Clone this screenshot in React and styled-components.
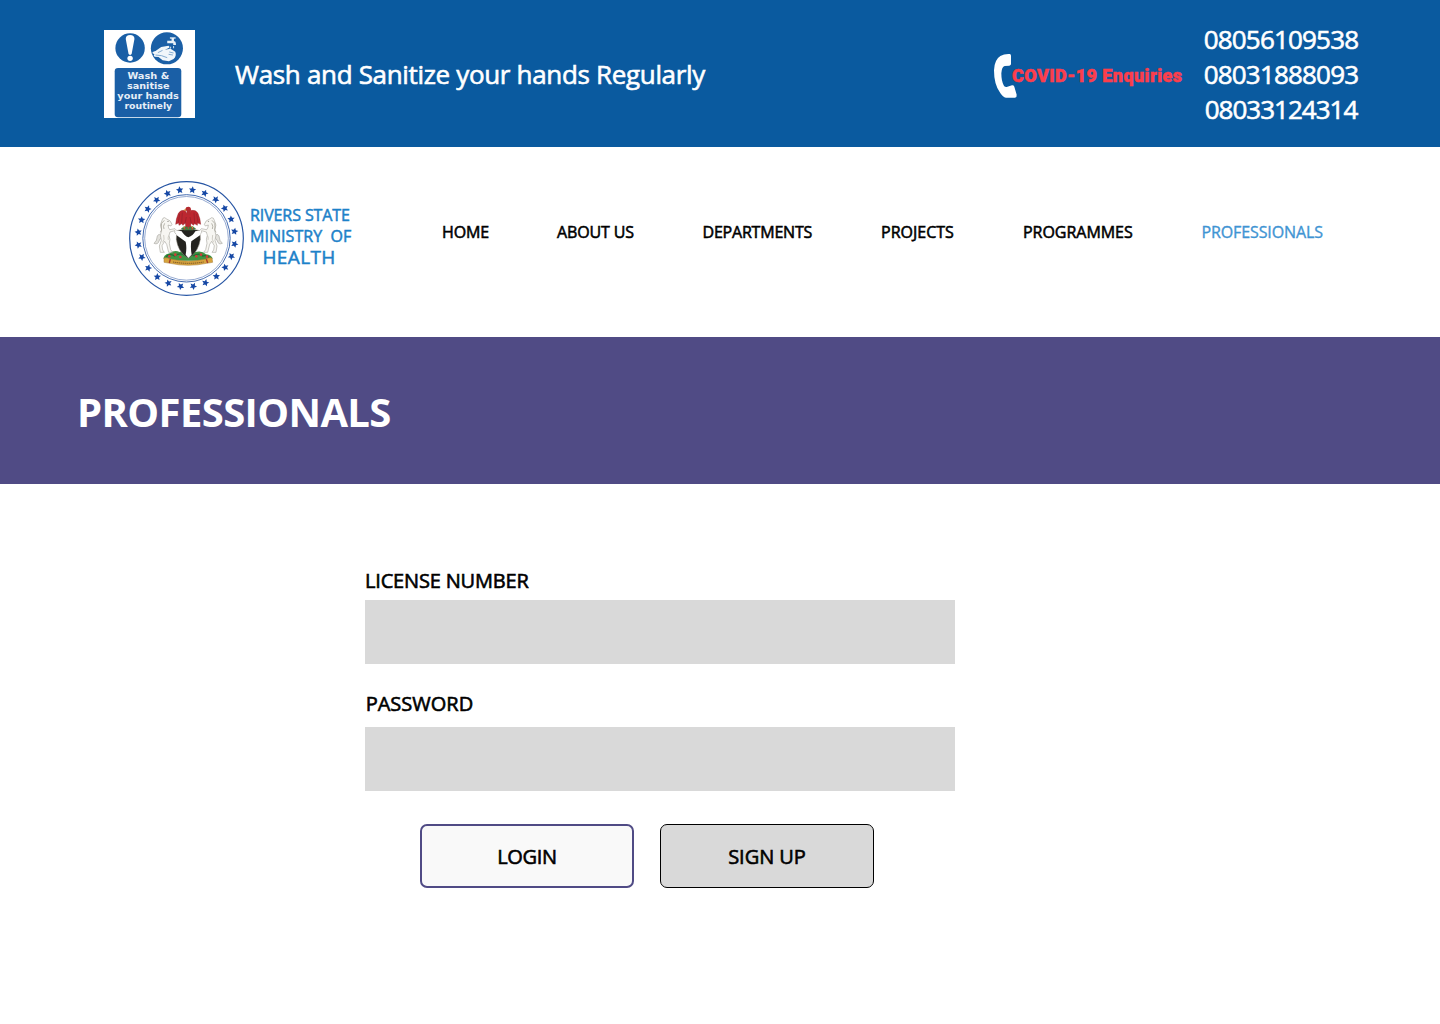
import React from "react";
import styled, { createGlobalStyle } from "styled-components";

const GlobalStyle = createGlobalStyle`
  *, *::before, *::after { box-sizing: border-box; }
  body {
    margin: 0;
    background: #fff;
    color: #000;
    font-family: "Open Sans", "Noto Sans", sans-serif;
  }
`;

const Page = styled.div`
  width: 1440px;
  min-height: 1024px;
  background: #fff;
`;

const AlertBar = styled.header`
  display: flex;
  align-items: flex-start;
  height: 147px;
  padding: 0 0 0 104px;
  background: #0a5a9f;
  color: #fff;
`;

const SignBox = styled.div`
  flex: none;
  width: 91px;
  height: 88px;
  margin-top: 30px;
  svg { display: block; }
`;

const Notice = styled.p`
  flex: 1;
  margin: 56px 0 0 40px;
  font-size: 26px;
  line-height: 36px;
  font-weight: 400;
  -webkit-text-stroke: 0.6px currentColor;
  letter-spacing: -0.33px;
  white-space: nowrap;
`;

const Enquiries = styled.div`
  display: flex;
  align-items: flex-start;
  width: 210px;
  margin-top: 53px;
  svg { display: block; flex: none; }
`;

const EnquiriesLabel = styled.span`
  margin: 11px 0 0 -6px;
  font-family: Roboto, sans-serif;
  font-size: 18px;
  line-height: 24px;
  font-weight: 900;
  color: #fb3e4c;
  -webkit-text-stroke: 0.5px currentColor;
  letter-spacing: 0.43px;
  white-space: nowrap;
`;

const PhoneList = styled.ul`
  list-style: none;
  width: 156px;
  margin: 22px 81px 0 0;
  padding: 0;
  text-align: center;
`;

const Phone = styled.li`
  font-size: 26px;
  line-height: 35px;
  font-weight: 400;
  -webkit-text-stroke: 0.6px currentColor;
  letter-spacing: ${(p) => p.$spacing};
`;

const NavBar = styled.div`
  display: flex;
  align-items: flex-start;
  height: 190px;
  padding: 33px 0 0 128px;
`;

const Brand = styled.div`
  display: flex;
  width: 314px;
  svg { display: block; flex: none; }
`;

const BrandName = styled.div`
  display: flex;
  flex-direction: column;
  margin: 25px 0 0 5px;
  color: #1c81c9;
`;

const BrandLine = styled.span`
  padding-left: ${(p) => p.$indent || 0}px;
  font-size: ${(p) => p.$size || 16}px;
  line-height: 21px;
  font-weight: 400;
  -webkit-text-stroke: 0.5px currentColor;
  letter-spacing: ${(p) => p.$spacing};
  white-space: pre;
`;

const Nav = styled.nav`
  display: flex;
  gap: 68px;
  margin-top: 41px;
`;

const NavLink = styled.a`
  width: ${(p) => p.$width}px;
  font-size: 16px;
  line-height: 22px;
  font-weight: 400;
  -webkit-text-stroke: ${(p) => (p.$active ? "0.35px" : "0.55px")} currentColor;
  color: ${(p) => (p.$active ? "#3f94d3" : "#000")};
  letter-spacing: ${(p) => p.$spacing};
  white-space: nowrap;
`;

const Banner = styled.section`
  display: flex;
  align-items: center;
  height: 147px;
  padding: 3px 0 0 77px;
  background: #504b85;
`;

const BannerTitle = styled.h1`
  margin: 0;
  color: #fff;
  font-size: 40px;
  line-height: 54px;
  font-weight: 700;
  letter-spacing: -0.6px;
`;

const Form = styled.form`
  display: flex;
  flex-direction: column;
  width: 590px;
  margin: 84px 0 0 365px;
`;

const Label = styled.label`
  height: 32px;
  margin-bottom: ${(p) => p.$gap || 0}px;
  padding-left: ${(p) => p.$indent || 0}px;
  font-size: 20px;
  line-height: 26px;
  font-weight: 400;
  -webkit-text-stroke: 0.6px currentColor;
  letter-spacing: ${(p) => p.$spacing};
`;

const Input = styled.input`
  width: 590px;
  height: 64px;
  margin-bottom: ${(p) => p.$after}px;
  padding: 0 16px;
  border: 0;
  border-radius: 0;
  background: #d9d9d9;
  font: inherit;
  font-size: 20px;
`;

const Actions = styled.div`
  display: flex;
  gap: 26px;
  padding-left: 55px;
`;

const Button = styled.button`
  width: 214px;
  height: 64px;
  padding: 2px 0 0;
  border: ${(p) => (p.$primary ? "2px solid #504b85" : "1px solid #000")};
  border-radius: 7px;
  background: ${(p) => (p.$primary ? "#f9f9f9" : "#d9d9d9")};
  color: #000;
  font-family: inherit;
  font-size: 20px;
  line-height: 26px;
  font-weight: 400;
  -webkit-text-stroke: 0.6px currentColor;
  letter-spacing: ${(p) => p.$spacing};
`;

const SignText = styled.text`
  font-family: "DejaVu Sans", sans-serif;
  font-weight: 700;
  font-size: 27px;
  fill: #e6eef7;
`;

function WashSign() {
  return (
    <svg width="91" height="88" viewBox="27 30 272 264" preserveAspectRatio="none">
      <rect x="27" y="30" width="272" height="264" fill="#fff" />
      <circle cx="105" cy="84" r="44" fill="#1a5fa6" />
      <path d="M92 57q0-12 13-12t13 12l-8 43q-1 5-5 5t-5-5z" fill="#fff" />
      <circle cx="105" cy="115" r="8" fill="#fff" />
      <circle cx="215" cy="85" r="48" fill="#1a5fa6" />
      <path d="M216 62h13v-8h7v9q6 1 6 8v4h-8v-5h-18z" fill="#e9f1f8" />
      <path d="M224 54h17" stroke="#e9f1f8" strokeWidth="4" />
      <path d="M181 93l17-12 22-4q6 4-1 8l-10 4 17-3 14 9q5 12-5 22l-14 7-19-3-12-10-12-1q-5-4 0-7l-6-3q-2-5 9-7z" fill="#f1f6fa" />
      <path d="M181 105l18 2 17 6M202 91l-14 7M222 96l13 3M220 103l13 2" stroke="#6f9cc8" strokeWidth="2.5" fill="none" />
      <path d="M235 78v7M227 80l-3 6" stroke="#c8dbec" strokeWidth="3" />
      <rect x="59" y="144" width="199" height="148" rx="10" fill="#1a5fa6" />
      <SignText x="97" y="176" textLength="125" lengthAdjust="spacingAndGlyphs">Wash &amp;</SignText>
      <SignText x="96" y="206" textLength="127" lengthAdjust="spacingAndGlyphs">sanitise</SignText>
      <SignText x="67" y="237" textLength="184" lengthAdjust="spacingAndGlyphs">your hands</SignText>
      <SignText x="88" y="268" textLength="143" lengthAdjust="spacingAndGlyphs">routinely</SignText>
    </svg>
  );
}

function Handset() {
  return (
    <svg width="25" height="46" viewBox="0 0 75 138">
      <path
        d="M22 9Q34 2 50 3q4 1 4 5v25q0 4-5 5l-14 1q-9 3-10 22 0 22 7 36 2 6 9 5l16-5q5-1 7 4l7 24q1 8-5 9H39q-10-1-19-17Q3 93 3 52 4 20 22 9z"
        fill="#fff"
      />
    </svg>
  );
}

const STAR = Array.from({ length: 10 }, (_, i) => {
  const radius = i % 2 ? 5.4 : 11.5;
  const angle = (i * Math.PI) / 5;
  return `${(radius * Math.sin(angle)).toFixed(2)},${(-radius * Math.cos(angle)).toFixed(2)}`;
}).join(" ");

function Horse() {
  return (
    <g stroke="#8d8b82" strokeWidth="1.4" strokeLinejoin="round">
      <path d="M36 111q-8-14-14-3-1 15-10 22 12 5 15-7l4-7z" fill="#e2e1dc" />
      <path
        d="M44 53l6 4q12 3 16 16l-3 5-9-3q1 10 5 14l16-3 7 8-3 9-5-5 1-6-15 4-3 10q5 12 1 24l4 19 6 8H56l-6-24-6-9-8 13 2 13 5 7H31l-3-19 6-17q-6-15 1-31-8-15 1-29 2-9 8-8z"
        fill="#f7f6f2"
      />
      <path d="M43 61q-12 8-9 20 3 10-3 16M44 70q-6 9-2 17" fill="none" stroke="#aaa79c" strokeWidth="2.5" />
      <path d="M41 105q4 14-3 22M56 107q-3 7-1 13" fill="none" stroke="#bdbab1" strokeWidth="2" />
      <circle cx="54" cy="64" r="1" fill="#333" />
    </g>
  );
}

function Crest() {
  return (
    <svg width="117" height="117" viewBox="24 30 351 351">
      <circle cx="199.5" cy="205.5" r="170.5" fill="#fff" stroke="#2856a4" strokeWidth="3.6" />
      <circle cx="199.5" cy="205" r="131" fill="none" stroke="#3761aa" strokeWidth="2.8" />
      <circle cx="199.5" cy="205" r="125.5" fill="none" stroke="#607fb9" strokeWidth="2" />
      {Array.from({ length: 24 }, (_, i) => {
        const a = ((7 + i * 15) * Math.PI) / 180;
        return (
          <polygon
            key={i}
            points={STAR}
            fill="#1648a5"
            transform={`translate(${199.5 + 145.5 * Math.sin(a)} ${204.5 - 145.5 * Math.cos(a)}) rotate(${i * 15 + 7})`}
          />
        );
      })}
      <g transform="translate(90 90)">
        <path d="M40 175q3-13 19-15 14-11 30-4 24-9 47 0 21-5 32 7 15 2 20 12l-7 7H47z" fill="#3f9443" />
        <path d="M48 170q12-11 25-2 18-12 30-2 16-9 28 1 17-9 27 1 11-4 20 4" fill="none" stroke="#226e34" strokeWidth="4" />
        <Horse />
        <g transform="translate(229 0) scale(-1 1)">
          <Horse />
        </g>
        <path d="M80 92q35-10 70 0l1 26q-6 39-36 57-31-18-36-57z" fill="#24231f" stroke="#898579" strokeWidth="1.5" />
        <path d="M76 91l19 3q8 14 20 18 14-5 21-18l18-3-3 14-27 19q-3 18 1 40l-10 10-8-10q4-20 0-39l-28-20z" fill="#fff" />
        <path d="M93 86l9-7h26l10 7-9 5h-27z" fill="#437e42" />
        <path
          d="M110 40l-5-9q-13-3-20 9-7 16-8 33l9-4 1 7 8-5 4 5 7-7 1 11h15l1-11 7 7 4-5 8 5 1-7 9 4q-1-17-8-33-7-12-20-9l-5 9z"
          fill="#bd2730"
          stroke="#8d2027"
          strokeWidth="1.2"
        />
        <path d="M106 27q1-7 9-7t8 9l-1 15h-13l1-12-7 1z" fill="#b52a30" />
        <path d="M89 42l-4 25M97 38l-2 31M140 42l4 25M132 38l2 31M109 51l-4 20M120 51l4 20" stroke="#85212a" strokeWidth="1.6" />
        <path d="M107 26l-7 5 7 2z" fill="#dfa546" />
        <path d="M105 78l-4 6M124 78l5 6" stroke="#dfa546" strokeWidth="3" />
        {[[58, 169], [76, 164], [91, 171], [139, 169], [153, 164], [171, 170], [104, 86], [115, 84], [127, 86]].map(([x, y]) => (
          <circle key={`${x}-${y}`} cx={x} cy={y} r={y < 100 ? 2.4 : 4} fill="#d33b38" />
        ))}
        <path d="M42 174q8-2 20 3 53 13 105 0 11-5 19-3l2 13-18 3q-55 12-110 0l-18-3z" fill="#d7a33d" stroke="#a57a35" strokeWidth="1.5" />
        <path d="M61 177l-3 12M169 177l4 12" stroke="#a63a2a" strokeWidth="4" />
        <path d="M69 186q47 8 92 0" fill="none" stroke="#725027" strokeWidth="3" strokeDasharray="4 2" />
      </g>
    </svg>
  );
}

const PHONES = [
  { number: "08056109538", spacing: "-0.82px" },
  { number: "08031888093", spacing: "-0.82px" },
  { number: "08033124314", spacing: "-1px" },
];

const LINKS = [
  { label: "HOME", width: 47, spacing: "-0.1px" },
  { label: "ABOUT US", width: 77.5, spacing: "-0.12px" },
  { label: "DEPARTMENTS", width: 110.5, spacing: "-0.2px" },
  { label: "PROJECTS", width: 74, spacing: "0" },
  { label: "PROGRAMMES", width: 110.5, spacing: "-0.03px" },
  { label: "PROFESSIONALS", width: 122, spacing: "-0.12px", active: true },
];

export default function App() {
  return (
    <Page>
      <GlobalStyle />
      <AlertBar>
        <SignBox><WashSign /></SignBox>
        <Notice>Wash and Sanitize your hands Regularly</Notice>
        <Enquiries>
          <Handset />
          <EnquiriesLabel>COVID-19 Enquiries</EnquiriesLabel>
        </Enquiries>
        <PhoneList>
          {PHONES.map((p) => <Phone key={p.number} $spacing={p.spacing}>{p.number}</Phone>)}
        </PhoneList>
      </AlertBar>
      <NavBar>
        <Brand>
          <Crest />
          <BrandName>
            <BrandLine $spacing="-0.1px">RIVERS STATE</BrandLine>
            <BrandLine $spacing="0.05px">MINISTRY  OF</BrandLine>
            <BrandLine $size={19} $indent={12.5} $spacing="0.35px">HEALTH</BrandLine>
          </BrandName>
        </Brand>
        <Nav>
          {LINKS.map((l) => (
            <NavLink key={l.label} $width={l.width} $active={l.active} $spacing={l.spacing}>{l.label}</NavLink>
          ))}
        </Nav>
      </NavBar>
      <Banner><BannerTitle>PROFESSIONALS</BannerTitle></Banner>
      <Form onSubmit={(e) => e.preventDefault()}>
        <Label htmlFor="license" $spacing="-0.18px">LICENSE NUMBER</Label>
        <Input id="license" $after={27} />
        <Label htmlFor="password" $gap={4} $indent={0.7} $spacing="0">PASSWORD</Label>
        <Input id="password" type="password" $after={33} />
        <Actions>
          <Button $primary $spacing="-0.3px">LOGIN</Button>
          <Button $spacing="-0.05px">SIGN UP</Button>
        </Actions>
      </Form>
    </Page>
  );
}
